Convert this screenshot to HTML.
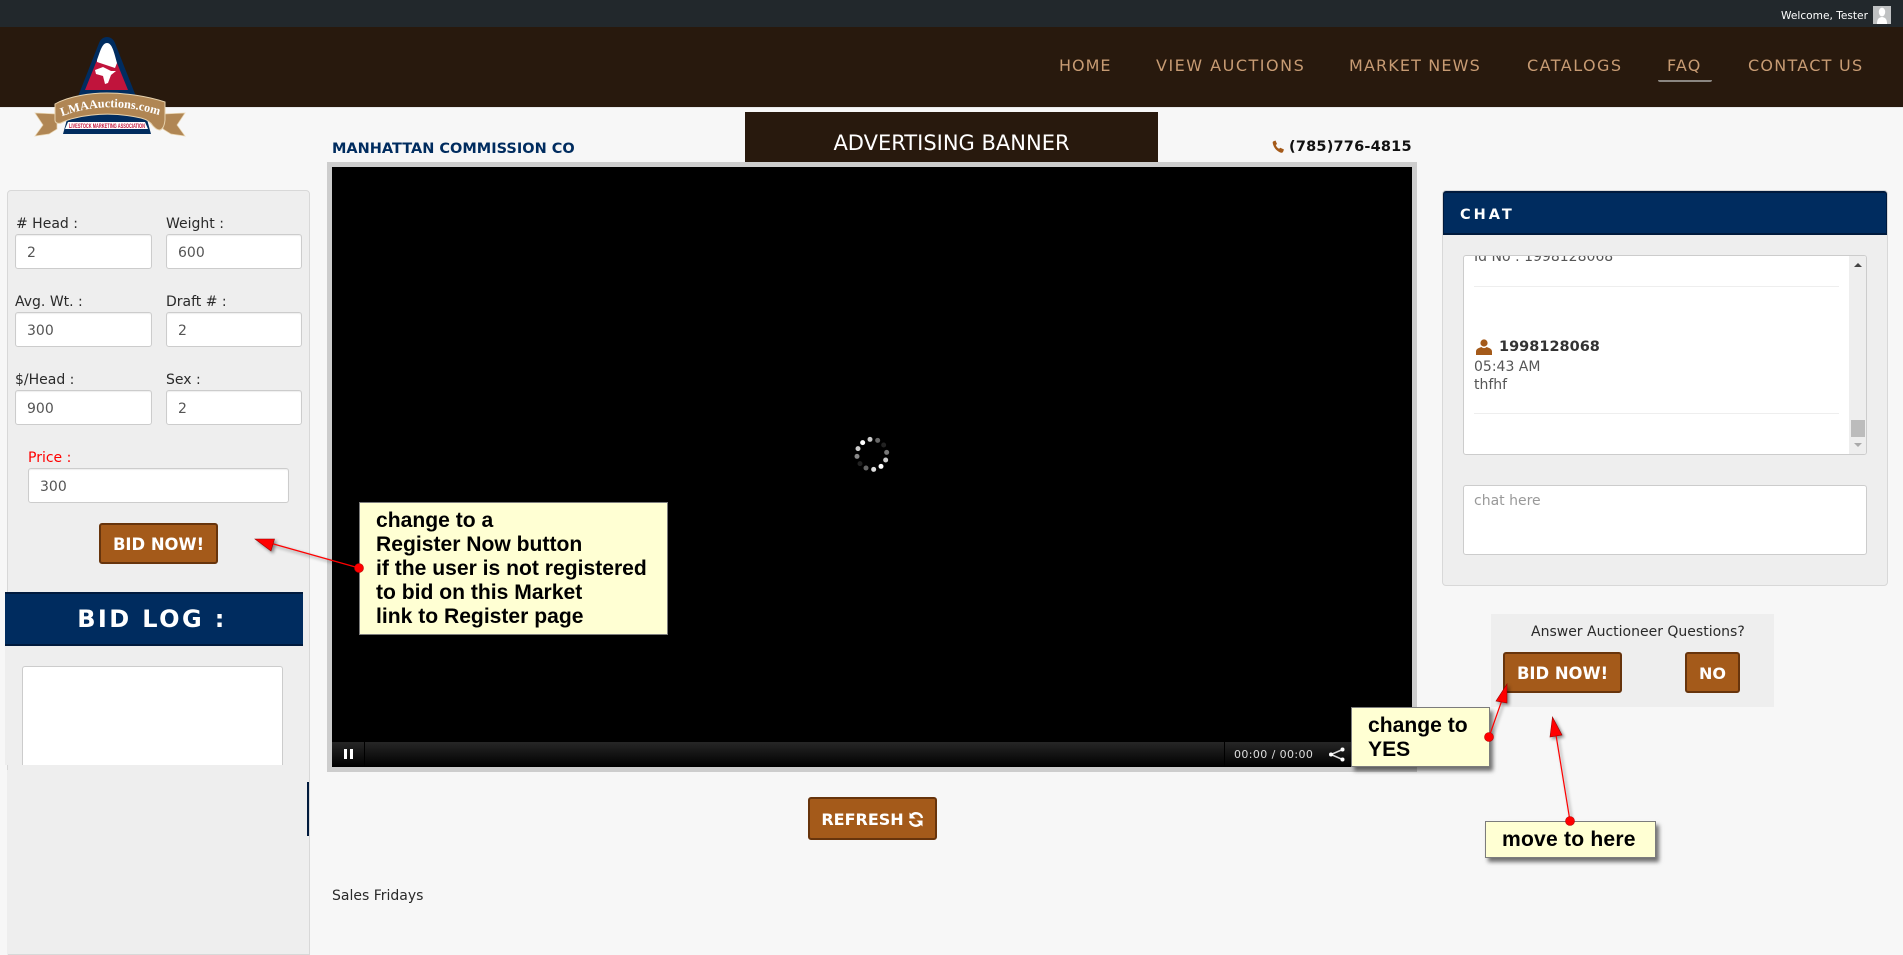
<!DOCTYPE html>
<html lang="en">
<head>
<meta charset="utf-8">
<title>LMA Auctions</title>
<style>
html,body{margin:0;padding:0;width:1903px;height:955px;overflow:hidden;background:#f7f7f7;}
body{position:relative;font-family:"DejaVu Sans",Verdana,sans-serif;font-size:14px;color:#333;}
div,a,span,label{position:absolute;white-space:nowrap;box-sizing:border-box;}
svg{position:absolute;overflow:visible;}
.inp{background:#fff;border:1px solid #ccc;border-radius:3px;height:35px;line-height:36px;padding-left:11px;color:#555;box-shadow:inset 0 1px 1px rgba(0,0,0,.07);font-size:14px;}
.lab{line-height:18px;font-size:14px;color:#2a2a2a;}
.btn{background:#a45a1a;border:2px solid #67340c;border-radius:3px;color:#fff;font-weight:bold;font-size:16px;text-align:center;}
.nav{top:55.500px;line-height:20px;font-size:16px;color:#c79b73;}
.call{background:#ffffd3;border:1px solid #7c7c7c;font-family:"Liberation Sans",Arial,sans-serif;font-weight:bold;font-size:21.100px;line-height:24px;color:#000;}
.shadow{box-shadow:3px 4px 4px rgba(0,0,0,.55);}
.navy{background:#002c5f;color:#fff;font-weight:bold;}
</style>
</head>
<body>

<!-- top bar -->
<div style="left:0;top:0;width:1903px;height:27px;background:#22282c;"></div>
<div style="left:1561px;top:27px;width:287px;height:4px;overflow:hidden;"><span style="left:0;top:-12px;color:#c0571c;font-size:16px;font-weight:bold;line-height:18px;letter-spacing:1px;">&#9742;(800)522-1840 &nbsp;/ &nbsp; &nbsp; &nbsp; &nbsp; &nbsp; &nbsp; &nbsp; &nbsp; &nbsp; &nbsp; g</span></div>
<div style="left:0;top:27px;width:1903px;height:80px;background:#28190d;"></div>
<div style="left:0;top:107px;width:1903px;height:1px;background:#e8e8e8;"></div>
<div style="left:1781px;top:8px;line-height:16px;font-size:10.600px;color:#fff;">Welcome, Tester</div>
<svg style="left:1873px;top:6px;" width="18" height="18" viewBox="0 0 18 18"><rect width="18" height="18" fill="#bfc1c2"/><ellipse cx="9" cy="6" rx="3.200" ry="4.400" fill="#fff"/><path d="M4 18c0-5 1.500-6.500 5-7 3.500.5 5 2 5 7z" fill="#fff"/></svg>

<!-- nav -->
<a class="nav" style="left:1059px;letter-spacing:1px;">HOME</a>
<a class="nav" style="left:1156px;letter-spacing:1.500px;">VIEW AUCTIONS</a>
<a class="nav" style="left:1349px;letter-spacing:1.140px;">MARKET NEWS</a>
<a class="nav" style="left:1527px;letter-spacing:1.460px;">CATALOGS</a>
<a class="nav" style="left:1667px;letter-spacing:1.150px;">FAQ</a>
<a class="nav" style="left:1748px;letter-spacing:1.260px;">CONTACT US</a>
<div style="left:1658px;top:80px;width:54px;height:2px;background:#8b8681;border-radius:0 0 2px 2px;"></div>

<!-- logo -->
<svg style="left:0;top:0;" width="200" height="145" viewBox="0 0 200 145">
  <path d="M99 43c3-8 13-8 16 0l22 56H77z" fill="#002c5f"/>
  <path d="M97 60 85 90h43l-11-27z" fill="#c0143c"/>
  <path d="M97 60c3-8 5-17 10-17 5 0 7 9 10 20l-2 5-18-6z" fill="#fff"/>
  <path d="M95 70l8-3 8 4 5 0-5 4-3 8-3 1-2-8-7-2z" fill="#fff"/>
  <path d="M63 134l6-22h76l6 22z" fill="#002c5f"/>
  <path d="M35 113l22 1v15l-8 5-14 2 8-11z" fill="#b08654" stroke="#e8d3ae" stroke-width=".7"/>
  <path d="M185 113l-22 1v15l8 5 14 2-8-11z" fill="#b08654" stroke="#e8d3ae" stroke-width=".7"/>
  <path d="M55 104c14-8 36-11 52-11 18 0 40 3 58 9v18c-.5 5-2 9-5 10-3 0-5-2-7-4-3-5-8-7-12-8-22-5-45-5-66 0-5 1-10 3-14 5-3 1-6 0-6-3z" fill="#b08654" stroke="#e8d3ae" stroke-width="1"/>
  <path id="lp" d="M60 117Q108 98 162 116" fill="none"/>
  <text font-family="Liberation Serif,serif" font-weight="bold" font-size="12.200" fill="#fff"><textPath href="#lp" startOffset="2">LMAAuctions.com</textPath></text>
  <path d="M65 129l3-7h77l3 7z" fill="#fff"/>
  <text x="69" y="128" font-family="Liberation Sans,sans-serif" font-weight="bold" font-size="6" textLength="76" lengthAdjust="spacingAndGlyphs" fill="#c0143c">LIVESTOCK MARKETING ASSOCIATION</text>
</svg>

<!-- left panel -->
<div style="left:7px;top:190px;width:303px;height:765px;background:#eee;border:1px solid #d8d8d8;border-radius:4px 4px 0 0;"></div>
<div style="left:7px;top:770px;width:1px;height:185px;background:#eee;"></div>
<label class="lab" style="left:16px;top:215px;"># Head :</label>
<label class="lab" style="left:166px;top:215px;">Weight :</label>
<div class="inp" style="left:15px;top:234px;width:137px;">2</div>
<div class="inp" style="left:166px;top:234px;width:136px;">600</div>
<label class="lab" style="left:15px;top:293px;">Avg. Wt. :</label>
<label class="lab" style="left:166px;top:293px;">Draft # :</label>
<div class="inp" style="left:15px;top:312px;width:137px;">300</div>
<div class="inp" style="left:166px;top:312px;width:136px;">2</div>
<label class="lab" style="left:15px;top:371px;">$/Head :</label>
<label class="lab" style="left:166px;top:371px;">Sex :</label>
<div class="inp" style="left:15px;top:390px;width:137px;">900</div>
<div class="inp" style="left:166px;top:390px;width:136px;">2</div>
<label class="lab" style="left:28px;top:449px;color:#f00;">Price :</label>
<div class="inp" style="left:28px;top:468px;width:261px;">300</div>
<a class="btn" style="left:99px;top:523px;width:119px;height:41px;line-height:39.500px;font-size:16.400px;">BID NOW!</a>

<!-- bid log -->
<div style="left:5px;top:594px;width:304px;height:171px;background:#eee;"></div>
<div class="navy" style="left:5px;top:592px;width:298px;height:54px;border-top:2px solid #001a3d;border-bottom:2px solid #001a3d;text-align:center;line-height:50px;font-size:24px;letter-spacing:2.400px;padding-right:4px;">BID LOG :</div>
<div style="left:22px;top:666px;width:261px;height:99px;background:#fff;border:1px solid #ccc;border-bottom:0;border-radius:3px 3px 0 0;"></div>
<div style="left:307px;top:782px;width:2px;height:54px;background:#001a3d;"></div>

<!-- title row -->
<div style="left:332px;top:140px;line-height:18px;font-size:14.500px;font-weight:bold;color:#002c5f;">MANHATTAN COMMISSION CO</div>
<div style="left:745px;top:112px;width:413px;height:50px;background:#28190d;color:#fff;font-size:21px;line-height:63.500px;text-align:center;">ADVERTISING BANNER</div>
<svg style="left:1272px;top:140px;" width="13" height="13" viewBox="0 0 13 13"><path d="M1 1.500 3.500.5 5 4 3.800 5c.5 1.600 1.700 3 3.300 3.800L8.300 7.700 12 9.500 11 12c-.4.600-1.200.9-2 .7C4.800 11.500 1.500 7.500.7 3c-.1-.6 0-1.100.3-1.500z" fill="#a45a1a"/></svg>
<div style="left:1289px;top:138px;line-height:18px;font-size:14.500px;letter-spacing:.2px;font-weight:bold;color:#111;">(785)776-4815</div>

<!-- video -->
<div style="left:327px;top:162px;width:1090px;height:610px;background:#cdcdcd;"></div>
<div style="left:332px;top:167px;width:1080px;height:600px;background:#000;"></div>
<div style="left:332px;top:742px;width:1080px;height:25px;background:linear-gradient(#262626,#000);"></div>
<div style="left:364px;top:742px;width:1px;height:25px;background:#000;"></div>
<div style="left:1224px;top:742px;width:1px;height:25px;background:#000;"></div>
<div style="left:344px;top:749px;width:3px;height:10px;background:#fff;"></div>
<div style="left:350px;top:749px;width:3px;height:10px;background:#fff;"></div>
<div style="left:1234px;top:746.500px;line-height:16px;font-size:11px;letter-spacing:.4px;color:#ddd;">00:00 / 00:00</div>
<svg style="left:1328px;top:747px;" width="17" height="15" viewBox="0 0 17 15"><path d="M14.500 2.500 3 7.500 14.500 12.500" fill="none" stroke="#ddd" stroke-width="1.500"/><circle cx="14.500" cy="2.500" r="2" fill="#fff"/><circle cx="3" cy="7.500" r="2" fill="#fff"/><circle cx="14.500" cy="12.500" r="2" fill="#fff"/></svg>

<!-- spinner -->
<svg style="left:820px;top:410px;" width="100" height="90" viewBox="0 0 300 270">
  <g>
    <circle cx="150" cy="88" r="7.500" fill="#ccc"/><circle cx="128" cy="98" r="7.500" fill="#fff"/>
    <circle cx="114" cy="116" r="7.500" fill="#ccc"/><circle cx="111" cy="139" r="7.500" fill="#888"/>
    <circle cx="120" cy="161" r="7.500" fill="#222"/><circle cx="138" cy="174" r="7.500" fill="#666"/>
    <circle cx="161" cy="178" r="7.500" fill="#ddd"/><circle cx="183" cy="169" r="7.500" fill="#fff"/>
    <circle cx="197" cy="150" r="7.500" fill="#ccc"/><circle cx="200" cy="127" r="7.500" fill="#777"/>
    <circle cx="191" cy="105" r="7.500" fill="#222"/><circle cx="173" cy="91" r="7.500" fill="#666"/>
  </g>
</svg>

<!-- refresh + text -->
<a class="btn" style="left:808px;top:797px;width:129px;height:43px;line-height:41px;padding-right:20px;">REFRESH</a>
<svg style="left:908px;top:811px;" width="16" height="17" viewBox="0 0 16 17"><path d="M14 7A6 6 0 0 0 3.500 4.500" fill="none" stroke="#fff" stroke-width="2.400"/><path d="M1.500 1.500v6h6z" fill="#fff"/><path d="M2 10a6 6 0 0 0 10.500 2.500" fill="none" stroke="#fff" stroke-width="2.400"/><path d="M14.500 15.500v-6h-6z" fill="#fff"/></svg>
<div style="left:332px;top:887px;line-height:18px;color:#2a2a2a;">Sales Fridays</div>

<!-- chat -->
<div style="left:1442px;top:190px;width:446px;height:396px;background:#eee;border:1px solid #d8d8d8;border-radius:4px;"></div>
<div class="navy" style="left:1443px;top:191px;width:444px;height:44px;border:1px solid #001a3d;border-top-width:2px;border-bottom-width:2px;border-radius:3px 3px 0 0;line-height:44px;padding-left:16px;font-size:14.500px;letter-spacing:3px;">CHAT</div>
<div style="left:1463px;top:255px;width:404px;height:200px;background:#fff;border:1px solid #ccc;border-radius:3px;overflow:hidden;">
  <div style="left:10px;top:-8.500px;line-height:18px;color:#555;">Id No : 1998128068</div>
  <div style="left:10px;top:30px;width:365px;height:1px;background:#eee;"></div>
  <svg style="left:12px;top:83px;" width="16" height="16" viewBox="0 0 16 16"><circle cx="8" cy="4" r="3.600" fill="#a45a1a"/><path d="M0 16v-3.500C0 9.500 3.500 8.800 5.500 8 7 9.500 9 9.500 10.500 8c2 .8 5.500 1.500 5.500 4.500V16z" fill="#a45a1a"/></svg>
  <div style="left:35px;top:82px;line-height:18px;font-size:14.500px;font-weight:bold;color:#333;">1998128068</div>
  <div style="left:10px;top:102px;line-height:18px;color:#555;">05:43 AM</div>
  <div style="left:10px;top:120px;line-height:18px;color:#555;">thfhf</div>
  <div style="left:10px;top:157px;width:365px;height:1px;background:#eee;"></div>
  <div style="left:385px;top:0;width:18px;height:198px;background:#eee;"></div>
  <div style="left:387px;top:164px;width:14px;height:17px;background:#bcbcbc;"></div>
  <div style="left:390px;top:7px;width:0;height:0;border:4px solid transparent;border-top:0;border-bottom:4px solid #444;"></div>
  <div style="left:390px;top:187px;width:0;height:0;border:4px solid transparent;border-bottom:0;border-top:4px solid #aaa;"></div>
</div>
<div style="left:1463px;top:485px;width:404px;height:70px;background:#fff;border:1px solid #ccc;border-radius:3px;"></div>
<div style="left:1474px;top:492px;line-height:18px;color:#999;">chat here</div>

<!-- answer box -->
<div style="left:1491px;top:614px;width:283px;height:93px;background:#eee;"></div>
<div style="left:1531px;top:623px;line-height:18px;color:#2a2a2a;">Answer Auctioneer Questions?</div>
<a class="btn" style="left:1503px;top:652px;width:119px;height:41px;line-height:39.500px;font-size:16.400px;">BID NOW!</a>
<a class="btn" style="left:1685px;top:652px;width:55px;height:41px;line-height:39.500px;">NO</a>

<!-- callouts -->
<div class="call" style="left:359px;top:502px;width:309px;height:133px;padding:6px 0 0 16px;white-space:pre;">change to a
Register Now button
if the user is not registered
to bid on this Market
link to Register page</div>
<div class="call shadow" style="left:1351px;top:707px;width:139px;height:60px;padding:6px 0 0 16px;white-space:pre;">change to
YES</div>
<div class="call shadow" style="left:1485px;top:821px;width:171px;height:37px;padding:6px 0 0 16px;letter-spacing:.2px;">move to here</div>

<!-- arrows -->
<svg style="left:0;top:0;" width="1903" height="955" viewBox="0 0 1903 955">
  <g style="filter:drop-shadow(2px 2px 1.500px rgba(0,0,0,.45));">
    <line x1="359" y1="568" x2="270" y2="543" stroke="#f00" stroke-width="1.200"/>
    <path d="M255 539 274.500 539 271 551z" fill="#f00" stroke="#900" stroke-width=".6"/>
    <line x1="1489" y1="737" x2="1502" y2="700" stroke="#f00" stroke-width="1.200"/>
    <path d="M1507 684 1507 703 1496 701z" fill="#f00" stroke="#900" stroke-width=".6"/>
    <line x1="1570" y1="821" x2="1556" y2="735" stroke="#f00" stroke-width="1.200"/>
    <path d="M1552.500 717 1562 735 1550 737z" fill="#f00" stroke="#900" stroke-width=".6"/>
  </g>
  <circle cx="359" cy="568" r="4.500" fill="#f00" stroke="#b00" stroke-width=".6"/>
  <circle cx="1489" cy="737" r="4.500" fill="#f00" stroke="#b00" stroke-width=".6"/>
  <circle cx="1570" cy="821" r="4.500" fill="#f00" stroke="#b00" stroke-width=".6"/>
</svg>
</body>
</html>
